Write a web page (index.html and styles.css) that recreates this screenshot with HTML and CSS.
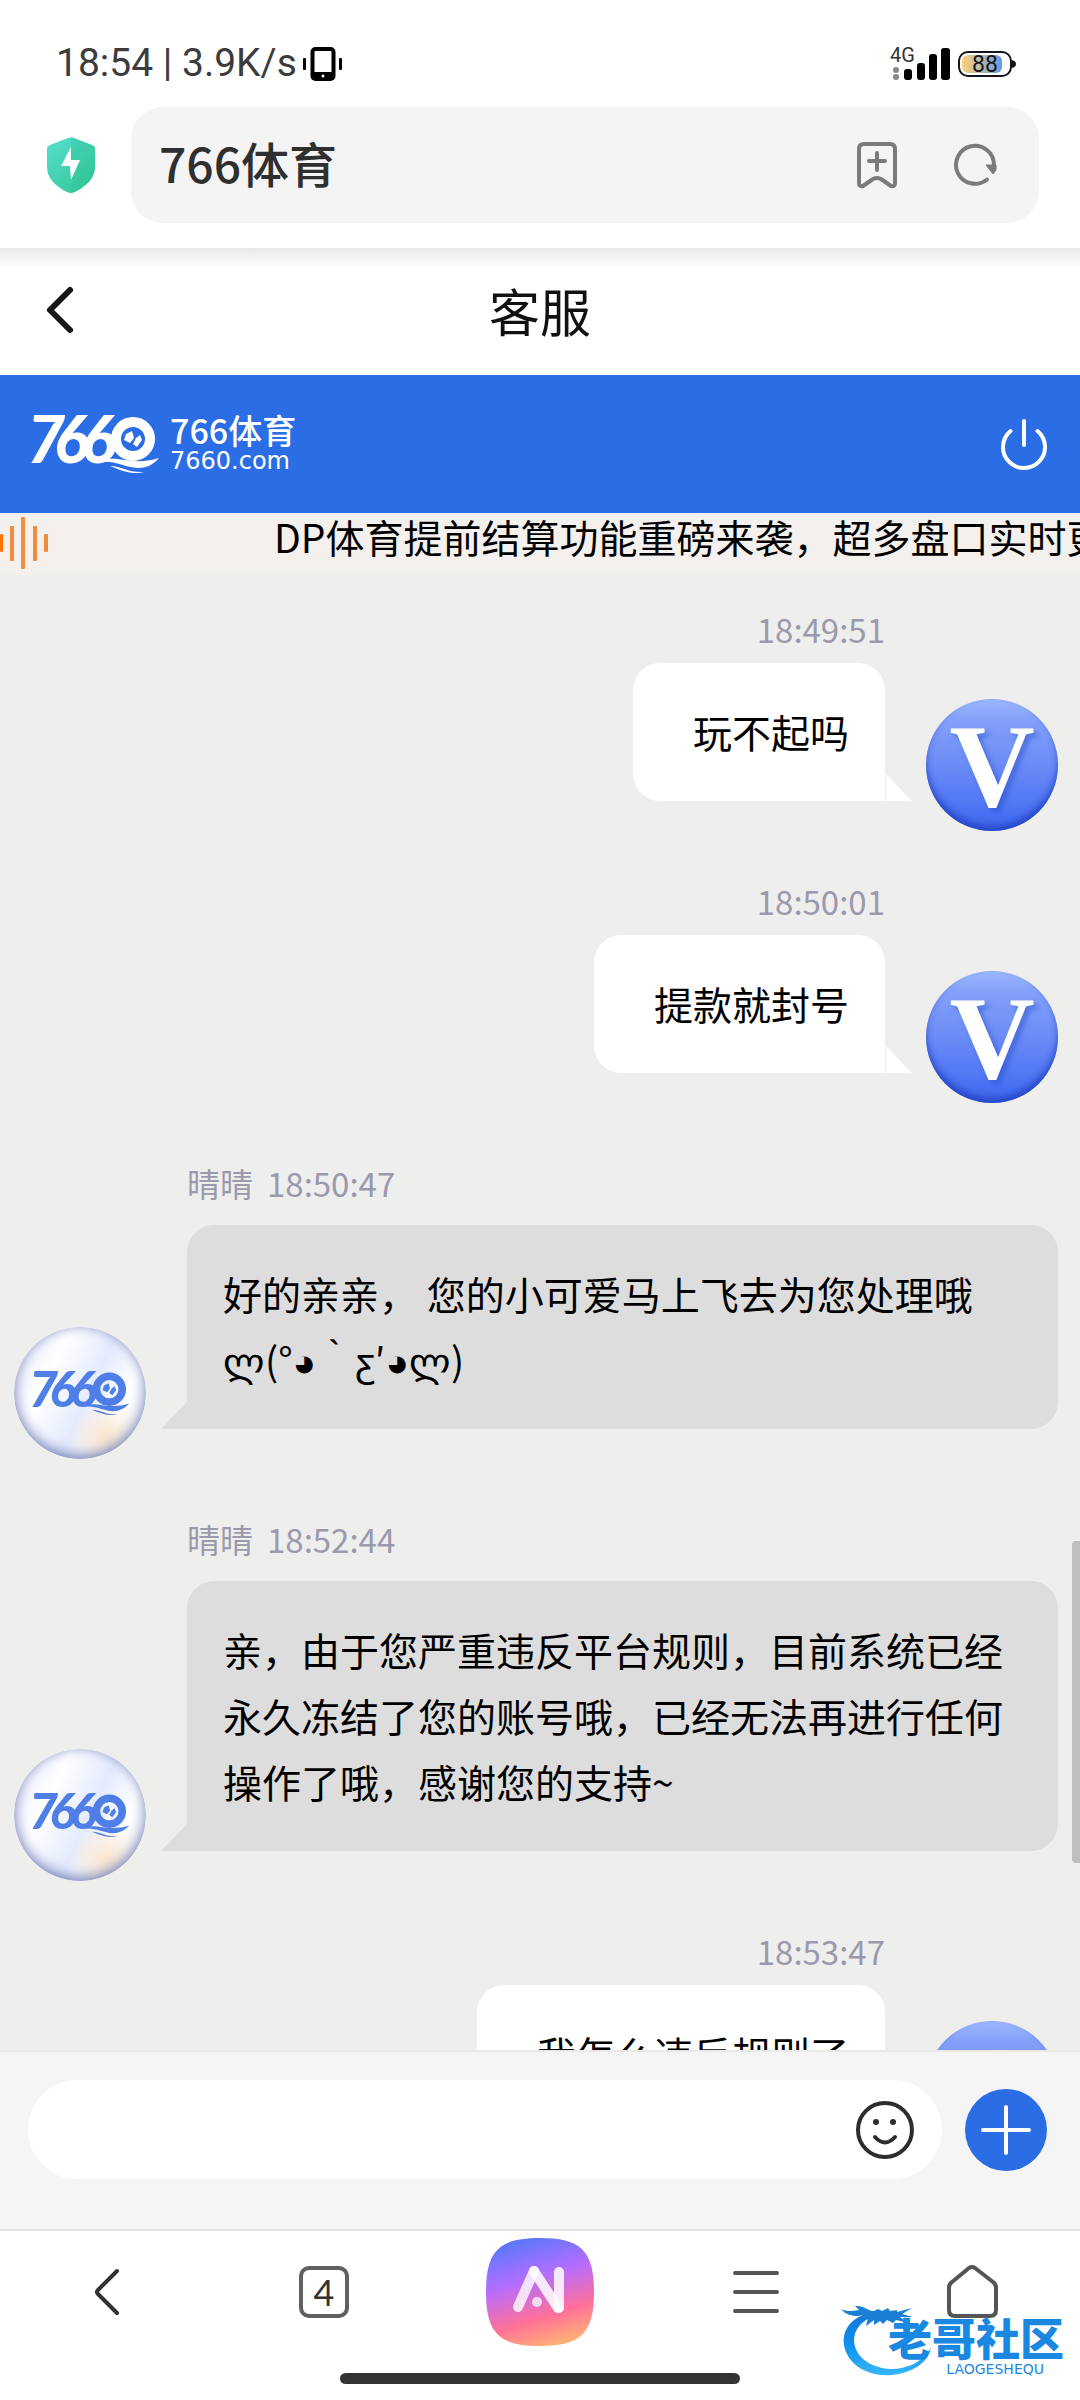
FILE: index.html
```html
<!DOCTYPE html>
<html lang="zh-CN">
<head>
  <meta charset="UTF-8" />
  <meta name="viewport" content="width=device-width, initial-scale=1.0" />
  <title>766体育</title>
  <link rel="stylesheet" href="styles.css">
</head>
<body>
  <!-- Brand logo, shared by the top bar and the agent avatars -->
  <svg class="defs" aria-hidden="true">
    <symbol id="brand" viewBox="0 0 130 58">
      <g class="brand-digits">
        <text x="-3" y="48">7</text>
        <text x="24" y="48">6</text>
        <text x="51" y="48">6</text>
      </g>
      <circle cx="103" cy="24" r="17" fill="none" stroke="currentColor" stroke-width="10" />
      <path d="M96 19l6-3 2 7-4 5-6-3zM106 23l4-3 2 5-5 7-4-3z" fill="currentColor" />
      <path d="M70 47c14-9 30 5 59-4-6 7-13 10-21 10-14-1-24-8-38-6z" fill="currentColor" />
      <path d="M80 51c12 0 18 7 34 6-12 3-22-1-34-6z" fill="currentColor" />
    </symbol>
  </svg>

  <div class="app">
    <!-- Phone status bar -->
    <div class="status-bar">
      <div class="status-left">
        <span>18:54 | 3.9K/s</span>
        <svg class="icon-vibrate" viewBox="0 0 40 34" aria-hidden="true">
          <rect x="9.500" y="2" width="21" height="30" rx="3" fill="none" stroke="#000" stroke-width="4" />
          <rect x="9" y="25" width="22" height="8" rx="2" fill="#000" />
          <circle cx="20" cy="29" r="1.500" fill="#fff" />
          <rect x="0" y="11" width="3" height="12" rx="1" fill="#000" />
          <rect x="36" y="11" width="3" height="12" rx="1" fill="#000" />
        </svg>
      </div>
      <div class="status-right">
        <svg class="icon-signal" viewBox="0 0 62 36" aria-hidden="true">
          <text class="signal-label" x="0" y="16">4G</text>
          <circle cx="6" cy="24" r="3" fill="#888" />
          <circle cx="6" cy="31" r="3" fill="#888" />
          <rect x="14" y="23" width="8" height="11" rx="3" />
          <rect x="27" y="17" width="8" height="17" rx="3" />
          <rect x="39" y="8" width="8" height="26" rx="3" />
          <rect x="51" y="2" width="9" height="32" rx="3" />
        </svg>
        <svg class="icon-battery" viewBox="0 0 58 26" aria-hidden="true">
          <defs>
            <linearGradient id="charge" x1="0" x2="1">
              <stop offset="0" stop-color="#ffd077" />
              <stop offset="0.45" stop-color="#b9bba8" />
              <stop offset="1" stop-color="#6199e6" />
            </linearGradient>
          </defs>
          <rect x="4" y="4" width="40" height="18" rx="6" fill="url(#charge)" />
          <rect x="1" y="1" width="52" height="24" rx="9" fill="none" stroke="#15151c" stroke-width="2" />
          <path d="M54 9q4 1 4 4t-4 4z" fill="#15151c" />
          <text class="battery-label" x="27" y="21">88</text>
        </svg>
      </div>
    </div>

    <!-- Browser address bar -->
    <div class="address-row">
      <svg class="icon-shield" viewBox="0 0 48 56" aria-hidden="true">
        <defs>
          <linearGradient id="shield" x1="0" y1="0" x2="0.600" y2="1">
            <stop offset="0" stop-color="#54decb" />
            <stop offset="1" stop-color="#3bcb9f" />
          </linearGradient>
        </defs>
        <path d="M21 1q3-1 6 0l18 7q3 1 3 4v18c0 11-8 19-20 25q-4 2-8 0C8 49 0 41 0 30V12q0-3 3-4z" fill="url(#shield)" />
        <path d="M24 0l3 1 18 7q3 1 3 4v18c0 11-8 19-24 26z" fill="#1fb88f" opacity="0.25" />
        <path d="M24 10L14 29h9l1 14 9-20h-9z" fill="#fff" />
      </svg>
      <div class="address-box">
        <span class="address-text">766体育</span>
        <button class="icon-button" type="button" aria-label="收藏">
          <svg class="icon-md" viewBox="0 0 48 48" fill="none" stroke="#7b7b7b" stroke-width="4" stroke-linecap="round" stroke-linejoin="round">
            <path d="M11 3h26q5 0 5 5v34q0 4-4 3l-10-7q-4-2-8 0l-10 7q-4 1-4-3V8q0-5 5-5zM24 12v17M16 20h16" />
          </svg>
        </button>
        <button class="icon-button" type="button" aria-label="刷新">
          <svg class="icon-md" viewBox="0 0 48 48">
            <path d="M36 38.500A19 19 0 1 1 43 24" fill="none" stroke="#7b7b7b" stroke-width="4" stroke-linecap="round" />
            <path d="M35 24h10v5l-3 4z" fill="#7b7b7b" stroke="#7b7b7b" stroke-linejoin="round" />
          </svg>
        </button>
      </div>
    </div>

    <!-- Page header -->
    <header class="page-header">
      <a class="back-link" href="#" aria-label="返回">
        <svg class="icon-back" viewBox="0 0 26 46"><path d="M23 3L3 23l20 20" fill="none" stroke="#161616" stroke-width="6" stroke-linecap="round" stroke-linejoin="round" /></svg>
      </a>
      <h1>客服</h1>
    </header>

    <div class="brand-bar">
      <svg class="brand-logo" viewBox="0 0 130 58"><use href="#brand" /></svg>
      <div class="brand-name">
        <strong>766体育</strong>
        <small>7660.com</small>
      </div>
      <button class="icon-button power" type="button" aria-label="退出">
        <svg class="icon-power" viewBox="0 0 48 52" fill="none" stroke="#fff" stroke-width="4" stroke-linecap="round">
          <path d="M24 3v24M10.500 13A21 21 0 1 0 37.500 13" />
        </svg>
      </button>
    </div>

    <div class="notice">
      <svg class="icon-wave" viewBox="0 0 50 54" aria-hidden="true">
        <rect x="0" y="17" width="3" height="18" rx="1" fill="#ff7300" />
        <rect x="10" y="9" width="4" height="35" rx="1" />
        <rect x="21" y="0" width="4" height="52" rx="1" />
        <rect x="33" y="9" width="4" height="35" rx="1" />
        <rect x="44" y="17" width="4" height="18" rx="1" />
      </svg>
      <p>DP体育提前结算功能重磅来袭，超多盘口实时更</p>
    </div>

    <!-- Messages -->
    <main class="chat">
      <article class="message message-out">
        <div class="message-body">
          <div class="meta"><time>18:49:51</time></div>
          <p class="bubble">玩不起吗</p>
        </div>
        <div class="avatar">V</div>
      </article>

      <article class="message message-out">
        <div class="message-body">
          <div class="meta"><time>18:50:01</time></div>
          <p class="bubble">提款就封号</p>
        </div>
        <div class="avatar">V</div>
      </article>

      <article class="message message-in">
        <div class="avatar">
          <svg class="brand-logo-small" viewBox="0 0 130 58"><use href="#brand" /></svg>
        </div>
        <div class="message-body">
          <div class="meta"><span>晴晴</span><time>18:50:47</time></div>
          <p class="bubble">好的亲亲， 您的小可爱马上飞去为您处理哦<br>ლ(°◕｀ƹ′◕ლ)</p>
        </div>
      </article>

      <article class="message message-in">
        <div class="avatar">
          <svg class="brand-logo-small" viewBox="0 0 130 58"><use href="#brand" /></svg>
        </div>
        <div class="message-body">
          <div class="meta"><span>晴晴</span><time>18:52:44</time></div>
          <p class="bubble">亲，由于您严重违反平台规则，目前系统已经永久冻结了您的账号哦，已经无法再进行任何操作了哦，感谢您的支持~</p>
        </div>
      </article>

      <article class="message message-out">
        <div class="message-body">
          <div class="meta"><time>18:53:47</time></div>
          <p class="bubble">我怎么违反规则了</p>
        </div>
        <div class="avatar">V</div>
      </article>
      <div class="scroll-thumb"></div>
    </main>

    <!-- Input -->
    <form class="composer">
      <div class="composer-field">
        <input type="text" name="message" aria-label="输入消息">
        <button class="icon-button" type="button" aria-label="表情">
          <svg class="icon-smile" viewBox="0 0 58 58" fill="none" stroke="#2d2d2d" stroke-width="4" stroke-linecap="round">
            <circle cx="29" cy="29" r="27" />
            <path d="M19 36q10 11 20 0" />
            <circle cx="20" cy="21" r="3" fill="#2d2d2d" stroke="none" />
            <circle cx="37" cy="21" r="3" fill="#2d2d2d" stroke="none" />
          </svg>
        </button>
      </div>
      <button class="plus" type="button" aria-label="更多">
        <svg viewBox="0 0 82 82"><path d="M41 18v46M18 41h46" stroke="#fff" stroke-width="4" stroke-linecap="round" /></svg>
      </button>
    </form>

    <!-- Browser toolbar -->
    <nav class="toolbar">
      <a href="#" aria-label="后退">
        <svg class="icon-nav" viewBox="0 0 54 54"><path d="M36 6L17 25q-2 2 0 4l19 19" fill="none" stroke="#333" stroke-width="4" stroke-linecap="round" stroke-linejoin="round" /></svg>
      </a>
      <a class="tabs" href="#" aria-label="标签页"><span class="tab-count">4</span></a>
      <a href="#" aria-label="AI">
        <svg class="icon-ai" viewBox="0 0 108 108">
          <defs>
            <linearGradient id="ai-fill" x1="0.350" y1="0" x2="0.650" y2="1">
              <stop offset="0" stop-color="#5a78fb" />
              <stop offset="0.370" stop-color="#b66dff" />
              <stop offset="0.720" stop-color="#ff7099" />
              <stop offset="1" stop-color="#ffb273" />
            </linearGradient>
          </defs>
          <path d="M54 0c41 0 54 13 54 54s-13 54-54 54S0 95 0 54 13 0 54 0z" fill="url(#ai-fill)" />
          <g fill="none" stroke="#fff" stroke-width="10" stroke-linecap="round" stroke-linejoin="round">
            <path d="M32 69L48 33" opacity="0.8" />
            <path d="M48 33l24 37" opacity="0.85" />
            <path d="M73 70V34" opacity="0.85" />
          </g>
          <circle cx="51" cy="64" r="5" fill="#fff" opacity="0.75" />
        </svg>
      </a>
      <a href="#" aria-label="菜单">
        <svg class="icon-nav" viewBox="0 0 54 54"><path d="M6 8h42M6 27h42M6 46h42" stroke="#555" stroke-width="4" stroke-linecap="round" /></svg>
      </a>
      <a href="#" aria-label="主页">
        <svg class="icon-nav" viewBox="0 0 54 54"><path d="M24 3q3-2 6 0l18 14q3 2 3 6v22q0 6-6 6H10q-6 0-6-6V23q0-4 3-6z" fill="none" stroke="#555" stroke-width="4" stroke-linejoin="round" /></svg>
      </a>
    </nav>
    <div class="home-bar"></div>

    <!-- Forum watermark -->
    <div class="watermark">
      <svg class="watermark-dragon" viewBox="0 0 96 82" aria-hidden="true">
        <defs>
          <linearGradient id="dragon" x1="0" y1="0" x2="0" y2="1">
            <stop offset="0" stop-color="#1577d2" />
            <stop offset="0.500" stop-color="#0c8ff0" />
            <stop offset="1" stop-color="#37b8f8" />
          </linearGradient>
        </defs>
        <path d="M30 17C12 21 2 33 4 49c3 19 23 32 48 30 20-2 36-12 39-27-8 13-22 21-40 21-22-1-36-13-37-28 0-12 7-20 21-25z" fill="url(#dragon)" />
        <path d="M1 13c6 3 12 2 18 1l-4-4c8-1 13 5 19 5l4-2 4 2 6-3 2 3 7-1 0 2 15-4-10 6 11 3-13 0 8 6-12-3-3 3-6-3-4 4-3-3-6 4 0-5-8 6 2-8-6 2 2-5-6 1c-6 0-12-1-17-7z" fill="#1a80d6" />
      </svg>
      <div class="watermark-text">
        <strong>老哥社区</strong>
        <small>LAOGESHEQU</small>
      </div>
    </div>
  </div>
</body>
</html>
```

FILE: styles.css
```css
* {
  box-sizing: border-box;
}
body {
  margin: 0;
  font-family: "Noto Sans CJK SC", "Noto Sans", sans-serif;
  background: #fff;
  color: #000;
}
h1, p {
  margin: 0;
  font-weight: 400;
}
svg {
  display: block;
  overflow: visible;
}
.defs {
  display: none;
}
.app {
  position: relative;
  display: flex;
  flex-direction: column;
  height: 100vh;
  overflow: hidden;
}
.icon-button {
  display: block;
  padding: 0;
  border: none;
  background: none;
  cursor: pointer;
}

/* Status bar */
.status-bar {
  display: flex;
  justify-content: space-between;
  align-items: center;
  padding: 40px 64px 20px 56px;
}
.status-left, .status-right {
  display: flex;
  align-items: center;
  gap: 6px;
}
.status-left {
  font-family: Roboto, sans-serif;
  font-size: 39px;
  line-height: 47px;
  color: #3c3c3c;
}
.icon-vibrate {
  width: 40px;
  height: 34px;
}
.icon-signal {
  width: 62px;
  height: 36px;
}
.icon-battery {
  width: 58px;
  height: 26px;
}
.signal-label {
  font: 20px Roboto, sans-serif;
  fill: #333;
}
.battery-label {
  font: 23px Roboto, sans-serif;
  text-anchor: middle;
  fill: #15151c;
}

/* Address bar */
.address-row {
  display: flex;
  align-items: center;
  gap: 36px;
  padding: 0 41px 25px 47px;
}
.icon-shield {
  width: 48px;
  height: 56px;
}
.address-box {
  flex: 1;
  display: flex;
  align-items: center;
  gap: 50px;
  height: 116px;
  padding: 0 40px 0 28px;
  border-radius: 32px;
  background: #f4f4f4;
}
.address-text {
  flex: 1;
  padding-bottom: 6px;
  font-size: 48px;
  font-weight: 500;
  color: #2f2f2f;
}
.icon-md {
  width: 48px;
  height: 48px;
}

/* Page header */
.page-header {
  display: grid;
  grid-template-columns: 1fr auto 1fr;
  align-items: center;
  height: 127px;
  padding: 0 47px 4px;
  background: linear-gradient(#e8e8e8, #fff 20px);
}
.page-header h1 {
  font-size: 51px;
  font-weight: 400;
  color: #111;
}
.icon-back {
  width: 26px;
  height: 46px;
}

/* Brand */
.brand-bar {
  display: flex;
  align-items: center;
  gap: 10px;
  height: 138px;
  padding: 0 32px 0 30px;
  background: #2b6de5;
  color: #fff;
}
.brand-logo {
  width: 130px;
  height: 58px;
}
.brand-logo-small {
  width: 99px;
  height: 44px;
}
.brand-digits text {
  font: italic 900 66px Lato, sans-serif;
  fill: currentColor;
}
.brand-name {
  flex: 1;
  display: flex;
  flex-direction: column;
}
.brand-name strong {
  font-size: 34px;
  font-weight: 500;
  line-height: 34px;
}
.brand-name small {
  font-family: "DejaVu Sans", sans-serif;
  font-size: 24px;
  line-height: 28px;
}
.icon-power {
  width: 48px;
  height: 52px;
}

/* Notice */
.notice {
  display: flex;
  align-items: center;
  height: 62px;
  overflow: hidden;
  background: #f4f0ed;
}
.notice p {
  flex: 1;
  padding: 0 0 16px 224px;
  font-size: 39px;
  line-height: 46px;
  white-space: nowrap;
}
.icon-wave {
  flex: none;
  width: 50px;
  height: 54px;
  fill: #f08c3c;
}

/* Chat */
.chat {
  position: relative;
  flex: 1;
  min-height: 0;
  overflow: hidden;
  background: #eeeeec;
}
.message {
  display: flex;
  align-items: flex-end;
  gap: 41px;
}
.message-out {
  justify-content: flex-end;
  margin-top: 78px;
  padding: 0 22px;
}
.message-in {
  margin-top: 88px;
  padding: 0 22px 0 14px;
}
.message:first-child {
  margin-top: 0;
  padding-top: 32px;
}
.message-in .message-body {
  flex: 1;
}
.avatar {
  flex: none;
  display: flex;
  align-items: center;
  justify-content: center;
  width: 132px;
  height: 132px;
  margin-bottom: -30px;
  border-radius: 50%;
}
.message-out .avatar {
  padding-top: 4px;
  font-family: "Liberation Serif", serif;
  font-size: 118px;
  font-weight: 700;
  line-height: 132px;
  color: #fff;
  text-shadow: 4px 4px 5px rgba(40, 75, 200, 0.5);
  background: linear-gradient(#9db6fb, #83a1fa 15%, #6b8cf6 50%, #4970f3 88%);
  box-shadow: inset 0 -6px 7px rgba(32, 64, 190, 0.8);
}
.message-in .avatar {
  color: #4f7fe6;
  background:
    radial-gradient(circle at 70% 84%, #fbe6cf, rgba(251, 230, 207, 0) 26%),
    linear-gradient(115deg, #e6ebfd, #fff 30%, #e4ebfe 55%, #fff 75%, #eef1fb);
  box-shadow: inset 0 -3px 14px #6f7db5;
}
.meta {
  display: flex;
  gap: 14px;
  font-size: 33px;
  line-height: 44px;
  color: #9a99ad;
}
.message-out .meta {
  justify-content: flex-end;
  margin-bottom: 12px;
}
.message-in .meta {
  margin-bottom: 20px;
}
.bubble {
  position: relative;
  padding: 35px 36px 37px;
  border-radius: 27px;
  font-size: 39px;
  line-height: 66px;
}
.message-out .bubble {
  padding-left: 60px;
  border-bottom-right-radius: 0;
  background: #fff;
}
.message-in .bubble {
  border-bottom-left-radius: 0;
  background: #ddd;
}
.bubble::after {
  content: "";
  position: absolute;
  bottom: 0;
  width: 26px;
  height: 27px;
  background: inherit;
}
.message-out .bubble::after {
  left: calc(100% + 1px);
  clip-path: polygon(0 0, 100% 100%, 0 100%);
}
.message-in .bubble::after {
  right: 100%;
  clip-path: polygon(100% 0, 100% 100%, 0 100%);
}
.scroll-thumb {
  position: absolute;
  top: 966px;
  right: 0;
  width: 8px;
  height: 322px;
  border-radius: 4px 0 0 4px;
  background: #bfbfbf;
}

/* Input */
.composer {
  display: flex;
  align-items: center;
  gap: 23px;
  padding: 28px 33px 50px 28px;
  border-top: 2px solid #e9e9e9;
  background: #f5f5f5;
}
.composer-field {
  flex: 1;
  display: flex;
  align-items: center;
  height: 99px;
  padding: 0 28px 0 40px;
  border-radius: 50px;
  background: #fff;
}
.composer-field input {
  flex: 1;
  min-width: 0;
  border: none;
  outline: none;
  background: none;
  font: inherit;
  font-size: 39px;
}
.icon-smile {
  width: 58px;
  height: 58px;
}
.plus {
  width: 82px;
  height: 82px;
  padding: 0;
  border: none;
  border-radius: 50%;
  background: #2b6de5;
}

/* Toolbar */
.toolbar {
  display: grid;
  grid-template-columns: repeat(5, 1fr);
  place-items: center;
  height: 124px;
  border-top: 2px solid #e2e2e4;
}
.icon-nav {
  width: 54px;
  height: 54px;
}
.icon-ai {
  width: 108px;
  height: 108px;
}
.tabs {
  color: #333;
  text-decoration: none;
}
.tab-count {
  display: block;
  width: 50px;
  height: 52px;
  border: 4px solid #606060;
  border-radius: 10px;
  font-family: Lato, sans-serif;
  font-size: 36px;
  line-height: 44px;
  text-align: center;
}
.home-bar {
  width: 400px;
  max-width: 50%;
  height: 11px;
  margin: 20px auto 16px;
  border-radius: 6px;
  background: #333;
}

/* Watermark */
.watermark {
  position: absolute;
  right: 16px;
  bottom: 22px;
  display: flex;
  align-items: flex-end;
}
.watermark-dragon {
  width: 96px;
  height: 82px;
  margin-right: -48px;
}
.watermark-text {
  display: flex;
  flex-direction: column;
  align-items: flex-end;
  color: #1a87e0;
}
.watermark-text strong {
  font-size: 44px;
  font-weight: 900;
  line-height: 46px;
}
.watermark-text small {
  padding-right: 20px;
  font-family: "DejaVu Sans", sans-serif;
  font-size: 14px;
  line-height: 18px;
}
```
